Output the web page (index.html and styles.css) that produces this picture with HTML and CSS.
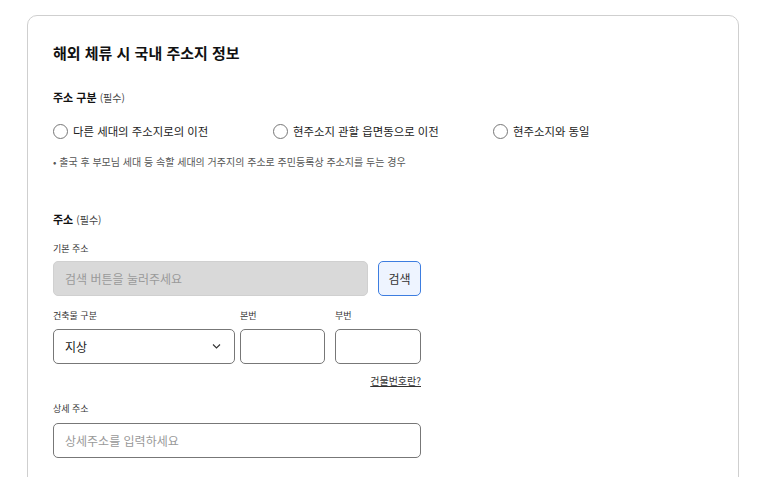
FILE: index.html
```html
<!DOCTYPE html>
<html lang="ko">
<head>
    <meta charset="UTF-8">
    <meta name="viewport" content="width=device-width, initial-scale=1.0">
    <title>해외 체류 시 국내 주소지 정보</title>
    <link rel="stylesheet" href="styles.css">
</head>
<body>
    <div class="card">
        <h2 class="title">해외 체류 시 국내 주소지 정보</h2>

        <div class="section-label">주소 구분 <span class="req">(필수)</span></div>
        <div class="radio-row">
            <label class="radio"><span class="circle"></span>다른 세대의 주소지로의 이전</label>
            <label class="radio"><span class="circle"></span>현주소지 관할 읍면동으로 이전</label>
            <label class="radio"><span class="circle"></span>현주소지와 동일</label>
        </div>
        <p class="note">• 출국 후 부모님 세대 등 속할 세대의 거주지의 주소로 주민등록상 주소지를 두는 경우</p>

        <div class="form">
            <div class="section-label section-gap">주소 <span class="req">(필수)</span></div>

            <div class="field-label">기본 주소</div>
            <div class="search-row">
                <input type="text" class="input input-disabled" placeholder="검색 버튼을 눌러주세요" disabled>
                <button class="btn-search">검색</button>
            </div>

            <div class="building-row">
                <div class="col col-type">
                    <div class="field-label">건축물 구분</div>
                    <div class="select">
                        <span>지상</span>
                        <svg width="9" height="5" viewBox="0 0 9 5"><path d="M1 .5l3.5 3.5 3.5-3.5" fill="none" stroke="#333" stroke-width="1.1"/></svg>
                    </div>
                </div>
                <div class="col col-main">
                    <div class="field-label">본번</div>
                    <input type="text" class="input">
                </div>
                <div class="col col-sub">
                    <div class="field-label">부번</div>
                    <input type="text" class="input">
                </div>
            </div>

            <div class="help-row"><a href="#" class="help">건물번호란?</a></div>

            <div class="field-label">상세 주소</div>
            <input type="text" class="input input-detail" placeholder="상세주소를 입력하세요">
        </div>
    </div>
</body>
</html>
```

FILE: styles.css
```css
* {
    box-sizing: border-box;
    margin: 0;
    padding: 0;
}

body {
    font-family: "Noto Sans CJK KR", "Noto Sans", sans-serif;
    background-color: white;
    color: #222;
    padding: 15px 22px 0 27px;
}

.card {
    border: 1px solid #cfcfcf;
    border-radius: 10px;
    padding: 26px 25px 60px;
}

.title {
    font-size: 15px;
    font-weight: 700;
    line-height: 22px;
    color: #111;
}

.section-label {
    margin-top: 24px;
    font-size: 11px;
    font-weight: 700;
    line-height: 18px;
    color: #111;
}

.section-label .req {
    font-weight: 400;
    font-size: 10px;
    color: #444;
}

.radio-row {
    display: flex;
    margin-top: 14px;
}

.radio {
    display: flex;
    align-items: center;
    gap: 5px;
    width: 220px;
    font-size: 11.4px;
    line-height: 20px;
    color: #222;
}

.circle {
    width: 15px;
    height: 15px;
    border: 1.3px solid #777;
    border-radius: 50%;
    background: white;
}

.note {
    margin-top: 13px;
    font-size: 10px;
    line-height: 16px;
    color: #555;
}

.form {
    width: 368px;
}

.section-gap {
    margin-top: 40px;
}

.field-label {
    margin-top: 13px;
    font-size: 9px;
    line-height: 14px;
    color: #333;
}

.input {
    display: block;
    width: 100%;
    height: 35px;
    margin-top: 5px;
    padding: 0 11px;
    border: 1px solid #777;
    border-radius: 5px;
    font-family: inherit;
    font-size: 12px;
    color: #222;
    background: white;
}

.input::placeholder {
    color: #999;
}

.input-disabled {
    background-color: #d9d9d9;
    border-color: #d0d0d0;
}

.search-row {
    display: flex;
    gap: 10px;
}

.search-row .input {
    flex: 1;
}

.btn-search {
    width: 43px;
    height: 35px;
    margin-top: 5px;
    border: 1px solid #3d7de0;
    border-radius: 5px;
    background-color: #eef4ff;
    font-family: inherit;
    font-size: 12px;
    color: #333;
}

.building-row {
    display: flex;
}

.col-type {
    width: 182px;
}

.col-main {
    width: 85px;
    margin-left: 5px;
}

.col-sub {
    width: 86px;
    margin-left: 10px;
}

.building-row .input {
    margin-top: 6px;
}

.select {
    display: flex;
    align-items: center;
    justify-content: space-between;
    height: 35px;
    margin-top: 6px;
    padding: 0 13px 0 11px;
    border: 1px solid #777;
    border-radius: 5px;
    font-size: 12px;
    color: #222;
}

.help-row {
    display: flex;
    justify-content: flex-end;
    margin-top: 10px;
}

.help {
    font-size: 10px;
    line-height: 14px;
    color: #333;
    text-decoration: underline;
}

.help-row + .field-label {
    margin-top: 14px;
}

.input-detail {
    margin-top: 7px;
}
```
